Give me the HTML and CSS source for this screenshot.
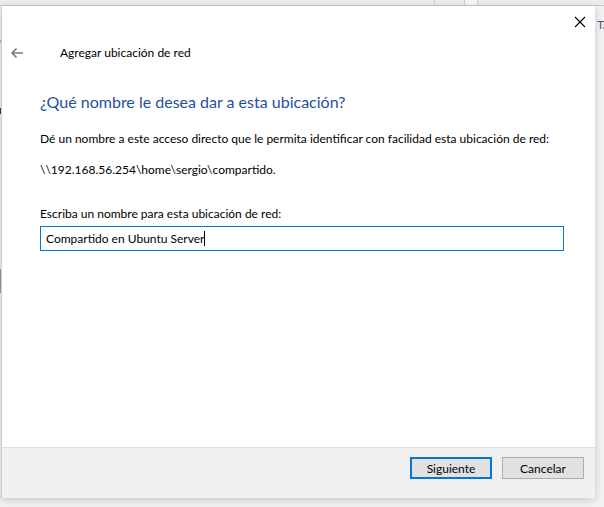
FILE: index.html
```html
<!DOCTYPE html>
<html lang="es">
<head>
<meta charset="utf-8">
<title>Agregar ubicación de red</title>
<link rel="stylesheet" href="styles.css">
</head>
<body>
<div class="desktop">
  <div class="topstrip">
    <span class="seg seg1"></span><span class="seg seg2"></span><span class="seg seg3"></span>
  </div>
  <div class="sidebits">
    <span class="bit bit-y"></span>
    <span class="bit bit-m"></span>
    <span class="bit bit-g"></span>
  </div>
  <div class="behind-text">Ta</div>

  <div class="dialog">
    <div class="titlebar">
      <svg class="close" width="12" height="12" viewBox="0 0 12 12"><path d="M1 1 L11 11 M11 1 L1 11" stroke="#000" stroke-width="1.1" fill="none"/></svg>
    </div>
    <div class="navrow">
      <svg class="back" width="14" height="12" viewBox="0 0 14 12"><path d="M13 6 H2 M6.5 1.5 L2 6 L6.5 10.5" stroke="#7a7a7a" stroke-width="1.6" fill="none"/></svg>
      <span class="navtitle">Agregar ubicación de red</span>
    </div>
    <div class="content">
      <h1 class="heading">¿Qué nombre le desea dar a esta ubicación?</h1>
      <p class="text desc">Dé un nombre a este acceso directo que le permita identificar con facilidad esta ubicación de red:</p>
      <p class="text path">\\192.168.56.254\home\sergio\compartido.</p>
      <label class="text label" for="nm">Escriba un nombre para esta ubicación de red:</label>
      <div class="input" id="nm"><span>Compartido en Ubuntu Server</span><span class="caret"></span></div>
    </div>
    <div class="footer">
      <button class="btn primary">Siguiente</button>
      <button class="btn">Cancelar</button>
    </div>
  </div>
</div>
</body>
</html>
```
FILE: styles.css
```css
html, body {
  margin: 0;
  padding: 0;
}
body {
  width: 604px;
  height: 507px;
  overflow: hidden;
  background: #f3f3f3;
  font-family: "Lato", "Noto Sans", sans-serif;
  font-size: 12px;
  color: #000;
}
.desktop {
  position: relative;
  width: 604px;
  height: 507px;
  background: #f2f2f2;
  overflow: hidden;
}
.topstrip {
  height: 5px;
  background: #ececec;
  border-bottom: 1px solid #c9c9c9;
  position: relative;
}
.seg {
  position: absolute;
  top: 0;
  height: 5px;
  border-left: 1px solid #d0d0d0;
}
.seg1 { left: 434px; }
.seg2 { left: 464px; width: 12px; background: #f6f6f6; }
.seg3 { left: 477px; }
.sidebits .bit {
  position: absolute;
  left: 0;
  width: 1px;
}
.bit-y { top: 40px; height: 3px; background: #e0b040; }
.bit-m { top: 108px; height: 6px; background: #7a1f3a; }
.bit-g { top: 269px; height: 24px; background: #9a9a9a; }
.behind-text {
  position: absolute;
  left: 597px;
  top: 17px;
  width: 7px;
  overflow: hidden;
  white-space: nowrap;
  font-size: 12px;
  color: #3a5a8a;
}
.dialog {
  position: absolute;
  left: 1px;
  top: 6px;
  width: 594px;
  height: 492px;
  background: #fff;
  border-left: 1px solid #cfcfcf;
  box-sizing: border-box;
  box-shadow: 0 2px 8px rgba(0,0,0,0.18);
  display: flex;
  flex-direction: column;
}
.titlebar {
  height: 31px;
  display: flex;
  justify-content: flex-end;
  align-items: center;
  padding-right: 9px;
}
.close { display: block; margin-top: 1px; }
.navrow {
  height: 31px;
  display: flex;
  align-items: center;
  padding-left: 8px;
}
.back { display: block; margin-right: 36px; }
.navtitle { font-size: 12px; }
.content {
  padding-left: 38px;
  padding-right: 31px;
  flex: 1;
}
.heading {
  margin: 24px 0 0 0;
  font-size: 16px;
  font-weight: normal;
  color: #1e4fa6;
  line-height: 20px;
}
.text {
  display: block;
  margin: 0;
  line-height: 16px;
}
.desc { margin-top: 19px; }
.path { margin-top: 15px; }
.label { margin-top: 28px; }
.input {
  margin-top: 4px;
  height: 25px;
  border: 1px solid #0078d7;
  box-sizing: border-box;
  display: flex;
  align-items: center;
  padding-left: 5px;
}
.caret {
  display: inline-block;
  width: 1px;
  height: 15px;
  background: #000;
}
.footer {
  height: 41px;
  background: #f0f0f0;
  border-top: 1px solid #dfdfdf;
  display: flex;
  justify-content: flex-end;
  align-items: flex-start;
  padding: 9px 11px 0 0;
  gap: 10px;
}
.btn {
  width: 82px;
  height: 22px;
  background: #e1e1e1;
  border: 1px solid #adadad;
  font-family: inherit;
  font-size: 12px;
  color: #000;
  padding: 0;
  margin: 0;
}
.btn.primary {
  border: 2px solid #0078d7;
}
```
